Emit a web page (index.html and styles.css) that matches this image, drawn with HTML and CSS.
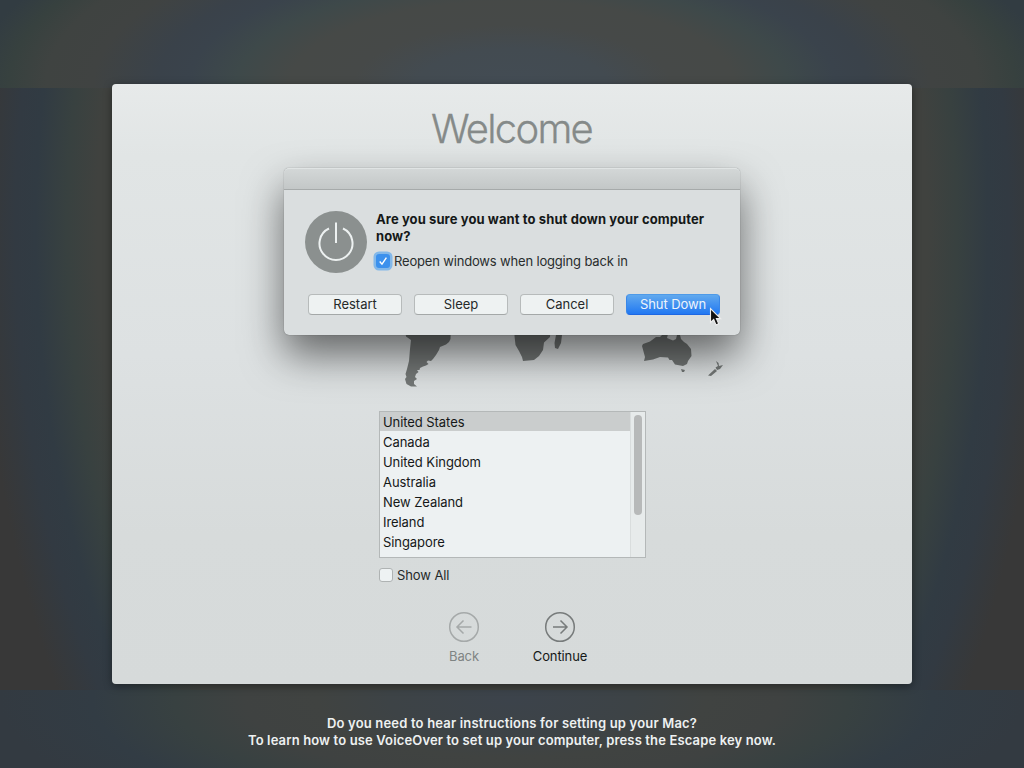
FILE: index.html
```html
<!DOCTYPE html>
<html lang="en">
<head>
<meta charset="utf-8">
<title>Welcome</title>
<link rel="stylesheet" href="styles.css">
</head>
<body>
<main class="assistant">
  <h1 class="title">Welcome</h1>
  <svg class="map" viewBox="380 167 370 224" aria-hidden="true">
    <path d="M404 320H451L450.500 339 449 342 446 344.500 440 347 439 350 436 355 433 359 431 361 428 360.500 426.500 362 428.500 364 426 365.500 423 366.500 420 368 419.500 370 417 370 418.500 372 416 374 415 377 417 379 414 381 414 384 417 386.500 411 386.500 406.500 384 405 379 406.500 377 405.500 374 407 369 409 361 410 349 411 340 406 336.500Z"/>
    <path d="M515 320H551L550 337 544 342.500 543 350 539 356 534 360 523 361 522 357 519 351 515.500 345 514.500 336Z"/>
    <path d="M556 335H562L561 343 558 349 555 348 554.500 343Z"/>
    <path d="M642 346 643 344 650 341.500 656 337 660 337 663 334H668L667 338 673 340.500 676 339 678 331 680 335 681 339 684 342 687 344 691 349 691.500 356 688 361 687 364 683 366 675 364.500 672 360 669.500 360 668 357.500 660 357 653 359.500 644 361 645 357Z"/>
    <path d="M681 369 685 370 684 372 682 372ZM716 361 718.500 363 719 366 723 365 720 369 717 370 715.500 367.500 718 366ZM715 369 717 371 711 376 708 375.500Z"/>
  </svg>
  <div class="picker">
    <ul class="countries">
      <li class="selected">United States</li><li>Canada</li><li>United Kingdom</li><li>Australia</li><li>New Zealand</li><li>Ireland</li><li>Singapore</li>
    </ul>
    <div class="track"><div class="thumb"></div></div>
  </div>
  <label class="show-all"><span class="box"></span><span>Show All</span></label>
  <nav class="nav">
    <div class="nav-item disabled"><svg viewBox="0 0 32 32"><circle cx="16" cy="16" r="14.300"/><path d="M23.500 16H9.500M15.500 9.500 9 16 15.500 22.500"/></svg><span class="back-label">Back</span></div>
    <div class="nav-item"><svg viewBox="0 0 32 32"><circle cx="16" cy="16" r="14.300"/><path d="M9 16H23M16.500 9.500 23 16 16.500 22.500"/></svg><span>Continue</span></div>
  </nav>
</main>
<section class="dialog">
  <div class="titlebar"></div>
  <div class="body">
    <div class="message">
      <svg class="power" viewBox="0 0 62 62"><circle class="disc" cx="31" cy="31" r="31"/><path d="M24 17.500A16.500 16.500 0 1 0 38 17.500M31 11.500V32"/></svg>
      <div class="copy">
        <h2>Are you sure you want to shut down your computer<br><span class="now">now?</span></h2>
        <label class="reopen"><span class="check"><svg viewBox="0 0 14 14"><path d="M3.700 7.500 6 10.200 10.400 3.700"/></svg></span><span>Reopen windows when logging back in</span></label>
      </div>
    </div>
    <div class="buttons"><button>Restart</button><button>Sleep</button><button>Cancel</button><button class="primary">Shut Down</button></div>
  </div>
</section>
<footer class="hint"><p class="line-one">Do you need to hear instructions for setting up your Mac?</p><p class="line-two">To learn how to use VoiceOver to set up your computer, press the Escape key now.</p></footer>
<svg class="cursor" viewBox="0 0 14 20"><path d="M1.500 1.500V15.500L4.700 12.500 7 18 9.700 16.800 7.400 11.600H11.600Z"/></svg>
</body>
</html>
```
FILE: styles.css
```css
* { box-sizing: border-box; }
body {
  margin: 0;
  width: 1024px;
  height: 768px;
  overflow: hidden;
  position: relative;
  padding-top: 84px;
  font: 13px/20px Inter, "Liberation Sans", sans-serif;
  color: #151818;
  background:
    radial-gradient(ellipse 530px 200px at 512px 85px, #434c54 0, #434b51 18%, #464948 30%, #464947 42%, #3e494a 52%, #3a434c 61%, #3a424a 67%, #404342 79%, #3f4341 88%, #37413f 95%, #323c42 102%) 0 0 / 1024px 88px no-repeat,
    radial-gradient(ellipse 512px 150px at 512px 10px, #3c434b 0, #3d4346 24%, #404341 38%, #3f4241 52%, #384141 66%, #323c44 82%, #333a41 100%) 0 690px / 1024px 78px no-repeat,
    radial-gradient(ellipse 512px 850px at 512px 230px, #40423f 0, #40423f 81%, #384140 87%, #313b43 93%, #323a42 97%, #383838 104%);
}
h1, h2, p, ul { margin: 0; padding: 0; }
.assistant {
  width: 800px;
  height: 600px;
  margin: 0 auto;
  border-radius: 4px;
  background: linear-gradient(#e7eaea, #e1e5e5 12%, #dde1e2 45%, #d7dbdb 75%, #d6dada);
  box-shadow: 0 2px 8px rgba(0,0,0,.4);
  display: flex;
  flex-direction: column;
  align-items: center;
}
.title {
  margin-top: 20px;
  font-size: 40px;
  line-height: 50px;
  font-weight: 300;
  letter-spacing: -1.75px;
  padding-right: 1px;
  color: #858a89;
  -webkit-text-stroke: .3px #858a89;
}
.map { width: 370px; height: 224px; margin: 13px 0 20px 106px; fill: #747877; }
.picker {
  width: 267px;
  height: 147px;
  display: flex;
  border: 1px solid #b4b8b8;
  background: #edf1f2;
}
.countries { flex: 1; list-style: none; letter-spacing: -.07px; }
.countries li { height: 20px; padding: 1px 0 0 3.500px; line-height: 18px; }
.countries .selected { background: #cacdcd; height: 19px; margin-bottom: 1px; }
.track { width: 15px; border-left: 1px solid #d9dddd; background: #e7ebeb; padding: 3px; }
.thumb { width: 8px; height: 100px; border-radius: 4px; background: #b7b9b9; }
.show-all { width: 267px; margin-top: 7px; display: flex; align-items: center; gap: 4px; color: #252929; letter-spacing: -.1px; }
.show-all span:last-child { padding-left: .5px; }
.box { width: 14px; height: 14px; border: 1px solid #afb3b3; border-radius: 3px; background: #eef2f3; }
.nav { display: flex; gap: 36px; margin-top: 26px; letter-spacing: -.1px; }
.nav-item { width: 60px; display: flex; flex-direction: column; align-items: center; gap: 3px; }
.nav-item svg { width: 32px; height: 32px; fill: none; stroke: #777b7b; stroke-width: 1.5; }
.nav-item.disabled { color: #7f8483; }
.nav-item.disabled svg { stroke: #a5a9a9; }
.dialog {
  position: absolute;
  left: 284px;
  top: 168px;
  width: 456px;
  height: 167px;
  border-radius: 5px;
  background: #dadedf;
  box-shadow: 0 0 1px rgba(0,0,0,.55), 0 20px 40px rgba(0,0,0,.55);
}
.titlebar {
  height: 22px;
  border-radius: 5px 5px 0 0;
  border-bottom: 1px solid #a6aaaa;
  border-top: 1px solid #e0e4e4;
  background: linear-gradient(#d3d7d7, #c3c7c7);
}
.body { padding: 20px 20px 0 21px; }
.message { display: flex; gap: 9px; }
.power { width: 62px; height: 62px; margin-top: 1px; flex: none; fill: none; stroke: #edf1f1; stroke-width: 2; }
.disc { fill: #8b908f; stroke: none; }
h2 { font-size: 13px; line-height: 17px; font-weight: 700; white-space: nowrap; padding-top: 1px; letter-spacing: .1px; }
.reopen { display: flex; gap: 4px; align-items: center; margin-top: 6px; color: #292d2d; letter-spacing: -.17px; }
.check { width: 14px; height: 14px; border-radius: 3px; background: #3c91ed; box-shadow: 0 0 0 2.500px #83b8e9; }
.check svg { display: block; fill: none; stroke: #fff; stroke-width: 1.4; }
.buttons { display: flex; gap: 12px; margin: 21px 0 0 3px; }
button {
  width: 94px;
  height: 21px;
  padding: 0;
  border: 1px solid #b7bbbb;
  border-bottom-color: #a4a8a8;
  border-radius: 4px;
  background: #eef2f2;
  color: #252929;
  font: 13px/19px Inter, sans-serif;
}
.primary { border-color: #4e9ae8 #3987e8 #1d67e2; background: linear-gradient(#61a9ee, #2178f2); color: #edf4fb; letter-spacing: -.08px; }
.hint { margin-top: 31px; text-align: center; color: #eef1f1; font-weight: 600; line-height: 17px; }
.line-one { letter-spacing: .18px; }
.line-two { letter-spacing: .14px; }
.cursor { position: absolute; left: 709px; top: 307px; width: 14px; height: 20px; fill: #111; stroke: #eee; stroke-width: 1.1; }
```
